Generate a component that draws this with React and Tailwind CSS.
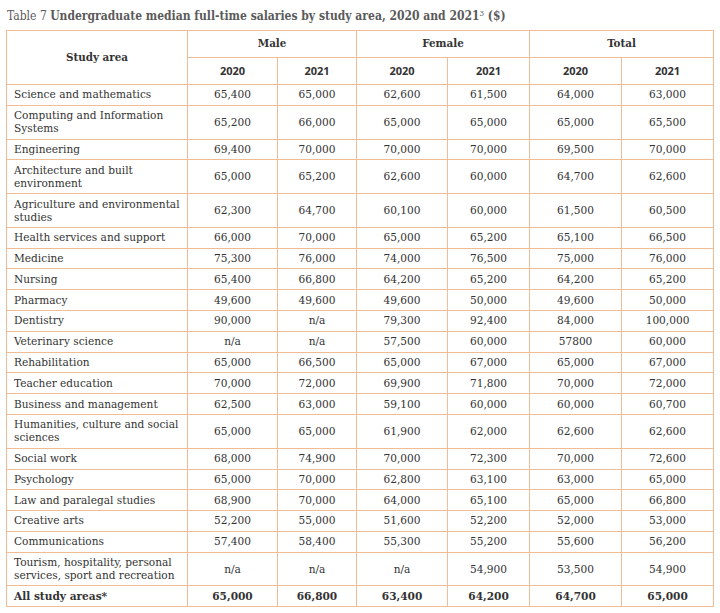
import React from 'react'

const rows = [
  ['Science and mathematics', '65,400', '65,000', '62,600', '61,500', '64,000', '63,000'],
  ['Computing and Information Systems', '65,200', '66,000', '65,000', '65,000', '65,000', '65,500'],
  ['Engineering', '69,400', '70,000', '70,000', '70,000', '69,500', '70,000'],
  ['Architecture and built environment', '65,000', '65,200', '62,600', '60,000', '64,700', '62,600'],
  ['Agriculture and environmental studies', '62,300', '64,700', '60,100', '60,000', '61,500', '60,500'],
  ['Health services and support', '66,000', '70,000', '65,000', '65,200', '65,100', '66,500'],
  ['Medicine', '75,300', '76,000', '74,000', '76,500', '75,000', '76,000'],
  ['Nursing', '65,400', '66,800', '64,200', '65,200', '64,200', '65,200'],
  ['Pharmacy', '49,600', '49,600', '49,600', '50,000', '49,600', '50,000'],
  ['Dentistry', '90,000', 'n/a', '79,300', '92,400', '84,000', '100,000'],
  ['Veterinary science', 'n/a', 'n/a', '57,500', '60,000', '57800', '60,000'],
  ['Rehabilitation', '65,000', '66,500', '65,000', '67,000', '65,000', '67,000'],
  ['Teacher education', '70,000', '72,000', '69,900', '71,800', '70,000', '72,000'],
  ['Business and management', '62,500', '63,000', '59,100', '60,000', '60,000', '60,700'],
  ['Humanities, culture and social sciences', '65,000', '65,000', '61,900', '62,000', '62,600', '62,600'],
  ['Social work', '68,000', '74,900', '70,000', '72,300', '70,000', '72,600'],
  ['Psychology', '65,000', '70,000', '62,800', '63,100', '63,000', '65,000'],
  ['Law and paralegal studies', '68,900', '70,000', '64,000', '65,100', '65,000', '66,800'],
  ['Creative arts', '52,200', '55,000', '51,600', '52,200', '52,000', '53,000'],
  ['Communications', '57,400', '58,400', '55,300', '55,200', '55,600', '56,200'],
  ['Tourism, hospitality, personal services, sport and recreation', 'n/a', 'n/a', 'n/a', '54,900', '53,500', '54,900'],
]

const total = ['All study areas*', '65,000', '66,800', '63,400', '64,200', '64,700', '65,000']

const cell = 'border border-[#efbc95] px-[7px] py-[3.4px] leading-[13px]'
const head = 'border border-[#efbc95] text-center font-bold text-[11.5px] text-[#333]'
const years = ['2020', '2021', '2020', '2021', '2020', '2021']

export default function App() {
  return (
    <div className="w-[720px] h-[613px] bg-white overflow-hidden font-stretch-condensed" style={{ fontFamily: '"DejaVu Serif", serif' }}>
      <div className="pl-[7px] pt-[9px] h-[30px] text-[12px] leading-[15px] text-[#5a5a5a]">
        Table 7 <span className="font-bold">Undergraduate median full-time salaries by study area, 2020 and 2021<sup className="text-[8px] font-normal">3</sup> ($)</span>
      </div>
      <table className="ml-[6px] table-fixed border-collapse text-[11.75px] text-[#333]" style={{ width: 707 }}>
        <colgroup>
          <col className="w-[181px]" />
          <col className="w-[90px]" />
          <col className="w-[79px]" />
          <col className="w-[91px]" />
          <col className="w-[82px]" />
          <col className="w-[92px]" />
          <col className="w-[92px]" />
        </colgroup>
        <thead>
          <tr className="h-[27px]">
            <th rowSpan={2} className={head}>Study area</th>
            <th colSpan={2} className={head}>Male</th>
            <th colSpan={2} className={head}>Female</th>
            <th colSpan={2} className={head}>Total</th>
          </tr>
          <tr className="h-[27px]">
            {years.map((y, i) => (
              <th key={i} className={head + ' font-stretch-normal text-[11px]'} style={{ fontFamily: '"Open Sans", sans-serif' }}>{y}</th>
            ))}
          </tr>
        </thead>
        <tbody>
          {rows.map((r) => (
            <tr key={r[0]}>
              {r.map((v, i) => (
                <td key={i} className={cell + (i === 0 ? ' text-left' : ' text-center')}>{v}</td>
              ))}
            </tr>
          ))}
          <tr className="font-bold">
            {total.map((v, i) => (
              <td key={i} className={cell + (i === 0 ? ' text-left' : ' text-center')}>{v}</td>
            ))}
          </tr>
        </tbody>
      </table>
    </div>
  )
}
